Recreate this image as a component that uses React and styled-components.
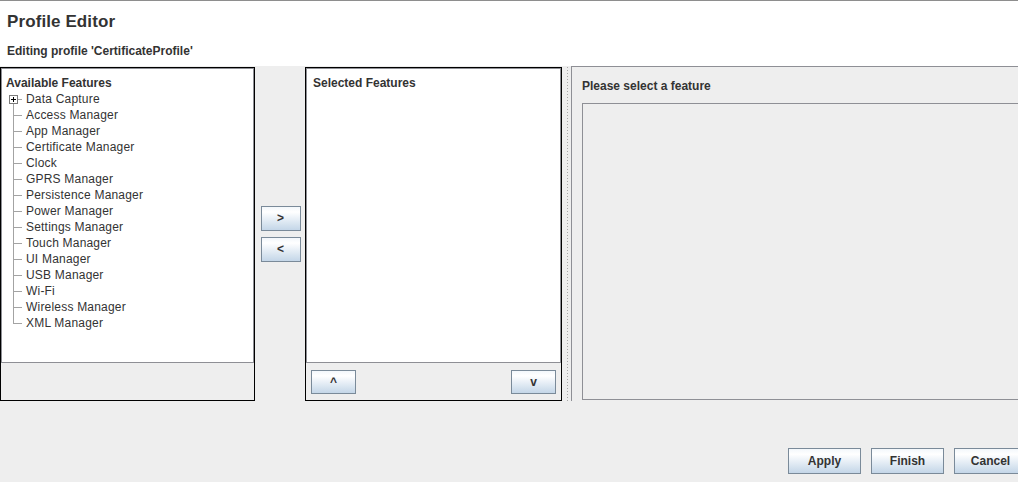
import styled, { createGlobalStyle } from 'styled-components';

const features = [
  'Access Manager',
  'App Manager',
  'Certificate Manager',
  'Clock',
  'GPRS Manager',
  'Persistence Manager',
  'Power Manager',
  'Settings Manager',
  'Touch Manager',
  'UI Manager',
  'USB Manager',
  'Wi-Fi',
  'Wireless Manager',
  'XML Manager',
];

export default function App() {
  return (
    <Window>
      <GlobalStyle />
      <Header>
        <Title>Profile Editor</Title>
        <SubTitle>Editing profile 'CertificateProfile'</SubTitle>
      </Header>
      <Main>
        <Panel $width={255}>
          <List>
            <ListTitle $indent={4}>Available Features</ListTitle>
            <TreeRow>
              <Branch $first>
                <Expander />
              </Branch>
              <RowText>Data Capture</RowText>
            </TreeRow>
            {features.map((f, i) => (
              <TreeRow key={f}>
                <Branch $last={i === features.length - 1} />
                <RowText>{f}</RowText>
              </TreeRow>
            ))}
          </List>
          <PanelBar />
        </Panel>
        <MoverColumn>
          <Button $w={40} $h={25}>&gt;</Button>
          <Button $w={40} $h={25}>&lt;</Button>
        </MoverColumn>
        <Panel $width={257}>
          <List>
            <ListTitle $indent={6}>Selected Features</ListTitle>
          </List>
          <PanelBar>
            <Button $w={45} $h={24}>^</Button>
            <Button $w={45} $h={24}>v</Button>
          </PanelBar>
        </Panel>
        <Divider />
        <DetailPanel>
          <DetailTitle>Please select a feature</DetailTitle>
          <DetailBox />
        </DetailPanel>
      </Main>
      <Footer>
        <Button $w={73} $h={26}>Apply</Button>
        <Button $w={73} $h={26}>Finish</Button>
        <Button $w={73} $h={26}>Cancel</Button>
      </Footer>
    </Window>
  );
}

const GlobalStyle = createGlobalStyle`
  body {
    margin: 0;
    overflow: hidden;
    background: #eeeeee;
    font-family: "Liberation Sans", Arial, sans-serif;
    color: #333333;
  }
`;

const Window = styled.div`
  width: 1030px;
  height: 482px;
  display: flex;
  flex-direction: column;
  background: #eeeeee;
  border-top: 1px solid #8e8e8e;
  box-sizing: border-box;
`;

const Header = styled.div`
  height: 65px;
  background: #ffffff;
  padding: 10px 0 0 7px;
  box-sizing: border-box;
`;

const Title = styled.div`
  font-size: 17px;
  font-weight: bold;
  line-height: 22px;
  letter-spacing: 0.1px;
`;

const SubTitle = styled.div`
  font-size: 12px;
  font-weight: bold;
  line-height: 16px;
  margin-top: 10px;
`;

const Main = styled.div`
  height: 335px;
  display: flex;
`;

const Panel = styled.div`
  width: ${p => p.$width}px;
  height: 334px;
  margin-top: 1px;
  border: 1px solid #000000;
  box-sizing: border-box;
  display: flex;
  flex-direction: column;
`;

const List = styled.div`
  flex: 1;
  background: #ffffff;
  border: 1px solid #8e8f95;
  padding-top: 6px;
`;

const ListTitle = styled.div`
  font-size: 12px;
  font-weight: bold;
  line-height: 16px;
  padding-left: ${p => p.$indent}px;
`;

const TreeRow = styled.div`
  display: flex;
  align-items: center;
  height: 16px;
  padding-left: 7px;
`;

const line = '#a3a3a3';

const Branch = styled.span`
  flex: 0 0 13px;
  height: 16px;
  display: flex;
  align-items: center;
  background:
    linear-gradient(${line}, ${line}) no-repeat 4px 8px / 9px 1px,
    linear-gradient(${line}, ${line}) no-repeat 4px ${p => (p.$first ? '8px' : '0')} /
      1px ${p => (p.$first ? '8px' : p.$last ? '9px' : '16px')};
`;

const Expander = styled.span`
  width: 9px;
  height: 9px;
  box-sizing: border-box;
  border: 1px solid #7a7a7a;
  background:
    linear-gradient(#000, #000) no-repeat center / 5px 1px,
    linear-gradient(#000, #000) no-repeat center / 1px 5px,
    #ffffff;
`;

const RowText = styled.span`
  margin-left: 4px;
  font-size: 12px;
  line-height: 16px;
  letter-spacing: 0.2px;
  white-space: nowrap;
`;

const PanelBar = styled.div`
  height: 37px;
  flex: 0 0 37px;
  display: flex;
  justify-content: space-between;
  align-items: flex-start;
  padding: 7px 5px 0;
  box-sizing: border-box;
`;

const MoverColumn = styled.div`
  width: 50px;
  display: flex;
  flex-direction: column;
  align-items: center;
  justify-content: center;
  gap: 6px;
  padding-left: 1px;
  box-sizing: border-box;
`;

const Button = styled.button`
  width: ${p => p.$w}px;
  height: ${p => p.$h}px;
  padding: 0;
  border: 1px solid #7a8a99;
  border-radius: 0;
  background: linear-gradient(
    to bottom,
    #f3f7fb 0%,
    #ffffff 22%,
    #e9f0f7 50%,
    #d6e3ef 75%,
    #c4d6e8 100%
  );
  font-family: "Liberation Sans", Arial, sans-serif;
  font-size: 12px;
  font-weight: bold;
  color: #333333;
  display: flex;
  align-items: center;
  justify-content: center;
`;

const Divider = styled.div`
  width: 9px;
  margin-top: 1px;
  background: linear-gradient(to bottom, #a8a8a8 1px, transparent 1px) repeat-y 5px 0 / 1px 3px;
`;

const DetailPanel = styled.div`
  flex: 1;
  display: flex;
  flex-direction: column;
  border-left: 1px solid #8e8f95;
  border-top: 1px solid #8e8f95;
  padding: 11px 5px 1px 10px;
`;

const DetailTitle = styled.div`
  font-size: 12px;
  font-weight: bold;
  line-height: 16px;
`;

const DetailBox = styled.div`
  flex: 1;
  margin-top: 9px;
  border: 1px solid #8e8f95;
`;

const Footer = styled.div`
  flex: 1;
  display: flex;
  justify-content: flex-end;
  align-items: flex-start;
  gap: 10px;
  padding: 47px 3px 0 0;
`;
